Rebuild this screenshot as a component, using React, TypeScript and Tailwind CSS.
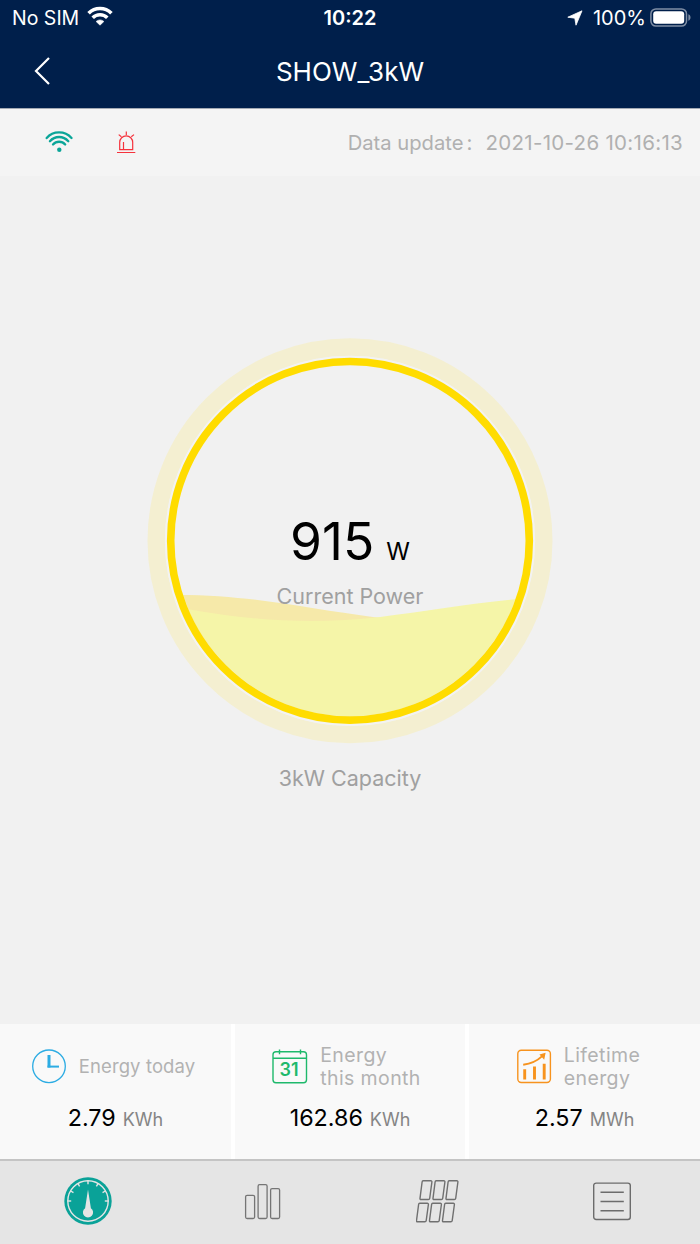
import React from 'react';

type IconProps = { className?: string };

const StatusWifi = ({ className }: IconProps) => (
  <svg className={className} width="26" height="20" viewBox="0 0 26 20" fill="none" stroke="#fff">
    <path d="M1.6 7.2a16.2 16.2 0 0 1 22.8 0" strokeWidth="3.7" />
    <path d="M5.7 11.7a10.4 10.4 0 0 1 14.6 0" strokeWidth="3.6" />
    <path d="M13 19.2l-3.9-3.7a5.6 5.6 0 0 1 7.8 0z" fill="#fff" strokeWidth="0.6" />
  </svg>
);

const Battery = () => (
  <svg width="42" height="20" viewBox="0 0 42 20" fill="none">
    <rect x="0.9" y="0.9" width="35.6" height="17.2" rx="5" stroke="#7f8ea5" strokeWidth="1.5" />
    <rect x="3.2" y="3.2" width="31" height="12.6" rx="3" fill="#fff" />
    <path d="M38.4 6.3c2.8 1 2.8 5.4 0 6.4z" fill="#7f8ea5" />
  </svg>
);

const SignalIcon = () => (
  <svg width="28" height="24" viewBox="0 0 28 24" fill="none" stroke="#0aa598" strokeWidth="2.3" strokeLinecap="round">
    <path d="M1.7 8C8 .6 20 .6 26.5 8" />
    <path d="M4.9 11.2c5-5.600 13.400-5.600 18.400 0" />
    <path d="M8 14.500c3.300-3.700 8.900-3.700 12.200 0" />
    <circle cx="14.3" cy="19.7" r="2.2" fill="#0aa598" stroke="none" />
  </svg>
);

const AlarmIcon = () => (
  <svg width="20" height="24" viewBox="0 0 20 24" fill="none" stroke="#f5323c" strokeWidth="1.2">
    <path d="M3.7 18.600v-7.300a6.500 6.500 0 0 1 13 0v7.300z" />
    <path d="M1 21.500h18.300M7.500 11v7.500M10.300 .5v3.500M2.700 3.600l2.700 2.200M18 3.600l-2.700 2.200" />
  </svg>
);

const ClockIcon = () => (
  <svg width="36" height="36" viewBox="0 0 36 36" fill="none" stroke="#2cace3">
    <circle cx="18" cy="18.3" r="16.3" strokeWidth="1.3" />
    <path d="M18 7v12.500" strokeWidth="3" />
    <path d="M16.500 18.600h11.500" strokeWidth="2" />
  </svg>
);

const CalendarIcon = () => (
  <svg width="36" height="36" viewBox="0 0 36 36" fill="none" stroke="#1fb96c" strokeWidth="1.4">
    <rect x="1" y="3.700" width="33.500" height="31" rx="3" />
    <path d="M1 10.200h33.500M7.500 1.500v4.800M28.500 1.500v4.800" />
    <text x="17" y="27.6" textAnchor="middle" fontSize="18" fontWeight="600" fill="#1fb96c" stroke="none">31</text>
  </svg>
);

const GrowthIcon = () => (
  <svg width="36" height="36" viewBox="0 0 36 36" fill="none" stroke="#f7931e">
    <rect x="1.800" y="2.300" width="32.600" height="32.200" rx="3.500" strokeWidth="1.400" />
    <path d="M8.700 21.200v10.200M18.500 18.500v12.900M28.200 15.700v15.700" strokeWidth="2.900" />
    <path d="M7.200 16.800c7.300-1 13.300-3.300 19-8.700" strokeWidth="1.900" />
    <path d="M29.600 4.700l-6.200 1.700 4.800 5.400z" fill="#f7931e" stroke="none" />
  </svg>
);

const TICKS = [-90, -60, -30, 0, 30, 60, 90];

const GaugeIcon = () => (
  <svg width="48" height="48" viewBox="-24 -24 48 48" fill="none">
    <circle r="23.7" fill="#0aa298" />
    <circle r="20.2" stroke="#e5e5e5" strokeWidth="1.4" />
    {TICKS.map((deg) => (
      <path key={deg} d="M0-20.500v3.700" stroke="#e5e5e5" strokeWidth="1.4" transform={`rotate(${deg})`} />
    ))}
    <path d="M0-11.500L2.900 7.200a5.100 5.100 0 1 1-5.800 0z" fill="#e5e5e5" />
  </svg>
);

const BarsIcon = () => (
  <svg width="38" height="38" viewBox="0 0 38 38" fill="none" stroke="#757575" strokeWidth="1.3">
    <rect x="1.600" y="13.300" width="9" height="23.200" rx="1.500" />
    <rect x="14.100" y="2.700" width="9" height="33.800" rx="1.500" />
    <rect x="26.600" y="6.600" width="9" height="29.900" rx="1.500" />
  </svg>
);

const PanelsIcon = () => (
  <svg width="44" height="44" viewBox="0 -0.8 44 44" fill="none" stroke="#707070" strokeWidth="1.4" strokeLinejoin="round">
    {[0, 13, 26].map((x) => (
      <g key={x} transform={`translate(${x} 0)`}>
        <path d="M7.200 1h7.600q1.200 0 1.100 1.200l-2.200 16.300q-.200 1.200-1.400 1.200H5q-1.200 0-1-1.200L6.100 2.200Q6.200 1 7.200 1z" />
        <path d="M3.700 23.500h7.600q1.200 0 1.100 1.200l-2.200 16.100q-.200 1.200-1.400 1.200H1.500q-1.200 0-1-1.200L2.600 24.700Q2.700 23.500 3.700 23.500z" />
      </g>
    ))}
  </svg>
);

const ListIcon = () => (
  <svg className="mr-[2px]" width="40" height="40" viewBox="0 -0.7 40 40" fill="none" stroke="#6c6c6c" strokeWidth="1.4">
    <rect x="1.700" y="1.400" width="36.600" height="36.400" rx="2.500" />
    <path d="M8.500 10.600h23.300M8.500 19.800h23.300M8.500 29h23.300" />
  </svg>
);

const PowerGauge = () => (
  <svg className="absolute inset-0" width="406" height="406" viewBox="147 338 406 406" fill="none">
    <defs>
      <clipPath id="bowl">
        <circle cx="350" cy="540.8" r="175.5" />
      </clipPath>
    </defs>
    <circle cx="350" cy="540.8" r="193.8" stroke="#f4efd1" strokeWidth="17.4" />
    <circle cx="350" cy="540.8" r="184.2" stroke="#f3f3f2" strokeWidth="1.8" />
    <g clipPath="url(#bowl)">
      <path d="M170 595C250 594 300 608 380 618L400 650H170z" fill="#f6e9a9" />
      <path d="M170 606C250 621 310 625 380 617C430 611 470 603 530 598V730H170z" fill="#f5f5a8" />
    </g>
    <circle cx="350" cy="540.8" r="179.3" stroke="#ffdc00" strokeWidth="7.6" />
  </svg>
);

interface StatProps {
  icon: React.ReactNode;
  label: React.ReactNode;
  value: string;
  unit: string;
  labelClass: string;
  rowClass: string;
}

const Stat = ({ icon, label, value, unit, labelClass, rowClass }: StatProps) => (
  <div className="flex flex-col items-center bg-[#f9f9f9] pt-[18px]">
    <div className={`flex h-12 items-center gap-3 ${rowClass}`}>
      {icon}
      <div className={`whitespace-nowrap pt-[2px] leading-[23.5px] text-[#b2b2b2] ${labelClass}`}>{label}</div>
    </div>
    <div className="mt-3 flex items-baseline gap-[7px] leading-8">
      <span className="text-[23.3px] text-black">{value}</span>
      <span className="text-[18px] text-[#858585]">{unit}</span>
    </div>
  </div>
);

export default function App() {
  return (
    <div className="flex h-[1244px] w-[700px] flex-col overflow-hidden bg-[#f1f1f1] font-['Inter',sans-serif]">
      <header className="h-[109px] border-b border-[#a3a9b4] bg-[#001f4b] text-white">
        <div className="grid h-9 grid-cols-3 items-center">
          <div className="flex items-center pl-3">
            <span className="pt-[2px] text-[19.5px]">No SIM</span>
            <StatusWifi className="ml-2 -mt-1" />
          </div>
          <div className="text-center text-[20px] font-semibold">10:22</div>
          <div className="flex items-center justify-end pr-2">
            <svg className="mr-[10px]" width="16" height="16" viewBox="0 0 16 16">
              <path d="M15 .8L9 15.200 7.800 8.200.8 7.200z" fill="#fff" stroke="#fff" strokeWidth="0.8" strokeLinejoin="round" />
            </svg>
            <span className="mr-1 text-[20px]">100%</span>
            <Battery />
          </div>
        </div>
        <div className="grid h-[70px] grid-cols-[100px_1fr_100px] items-center">
          <svg className="ml-[34px]" width="17" height="30" viewBox="0 0 17 30" fill="none" stroke="#fff" strokeWidth="2.2">
            <path d="M15 2L2 15l13 13" />
          </svg>
          <h1 className="text-center text-[26px]">SHOW_3kW</h1>
        </div>
      </header>

      <div className="flex h-[67px] items-center bg-[#f4f4f4] pl-[45px] pr-[17px]">
        <div className="pb-[2px]">
          <SignalIcon />
        </div>
        <div className="ml-[43px]">
          <AlarmIcon />
        </div>
        <div className="ml-auto flex items-baseline whitespace-pre pt-px text-[20.5px] tracking-[0.3px] text-[#b0b0b0]">
          <span className="text-[20.2px] tracking-normal">Data update</span>
          <span className="w-[22px] pl-[3px]">:</span>
          <span>2021-10-26 10:16:13</span>
        </div>
      </div>

      <main className="flex flex-1 flex-col items-center pt-[162px]">
        <div className="relative h-[406px] w-[406px]">
          <PowerGauge />
          <div className="relative flex flex-col items-center pt-[173px]">
            <div className="flex items-baseline gap-3 leading-[60px] text-black">
              <span className="text-[51.5px]">915</span>
              <span className="text-[24px]">W</span>
            </div>
            <div className="-mt-px text-[21.5px] leading-[30px] text-[#a0a0a0]">Current Power</div>
          </div>
        </div>
        <div className="mt-[19px] text-[21.5px] leading-[30px] text-[#a0a0a0]">3kW Capacity</div>
      </main>

      <section className="grid h-[135px] grid-cols-[231px_230px_231px] gap-1 bg-white">
        <Stat
          icon={<ClockIcon />}
          label="Energy today"
          value="2.79"
          unit="KWh"
          labelClass="text-[18.5px] tracking-[0.1px]"
          rowClass="mr-[5px]"
        />
        <Stat
          icon={<CalendarIcon />}
          label={<>Energy<br />this month</>}
          value="162.86"
          unit="KWh"
          labelClass="text-[19.5px] tracking-[0.4px]"
          rowClass="mr-[7px]"
        />
        <Stat
          icon={<GrowthIcon />}
          label={<>Lifetime<br />energy</>}
          value="2.57"
          unit="MWh"
          labelClass="text-[19.5px] tracking-[0.4px]"
          rowClass="mr-[13px]"
        />
      </section>

      <nav className="grid h-[85px] grid-cols-4 place-items-center border-t-2 border-[#c4c4c4] bg-[#e5e5e5] pb-[3px]">
        <GaugeIcon />
        <BarsIcon />
        <PanelsIcon />
        <ListIcon />
      </nav>
    </div>
  );
}
